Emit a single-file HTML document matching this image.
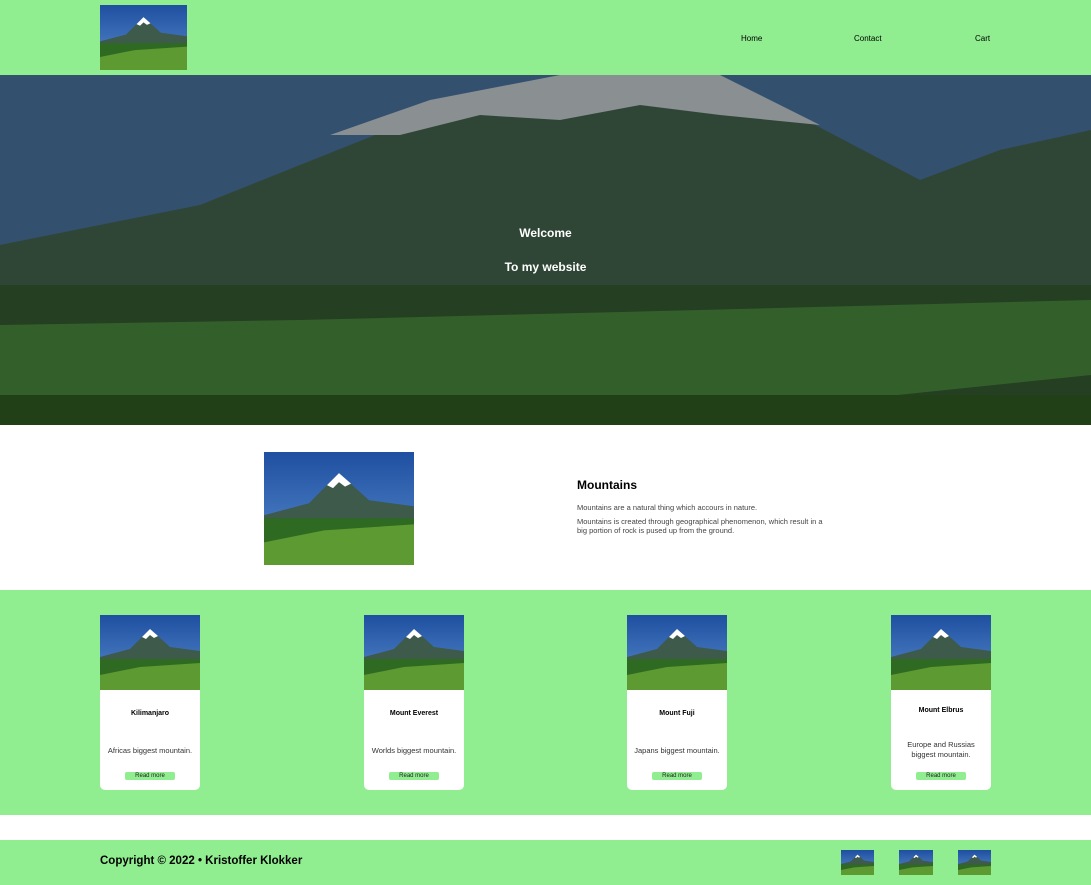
<!DOCTYPE html>
<html><head><style>
*{margin:0;padding:0;box-sizing:border-box}
body{width:1091px;height:885px;font-family:"Liberation Sans",sans-serif;background:#fff;position:relative;overflow:hidden}
.abs{position:absolute}
.g{background:#90ee90}
svg{display:block}
.nav{font-size:8px;color:#000}
.card{position:absolute;top:615px;width:100px;height:175px;background:#fff;border-radius:0 0 5px 5px;text-align:center}
.card h4{font-size:7px;position:absolute;top:95px;width:100%}
.card p{font-size:7.5px;color:#333;position:absolute;width:100%;padding:0 4px}
.card .b{position:absolute;top:157px;left:25px;width:50px;height:8px;background:#90ee90;border-radius:2px;font-size:6px;line-height:8px;color:#222}
</style></head><body>
<svg width="0" height="0" style="position:absolute"><defs>
<linearGradient id="sky" x1="0" y1="0" x2="0" y2="1"><stop offset="0" stop-color="#1f4fa0"/><stop offset="1" stop-color="#5a8fd0"/></linearGradient>
<symbol id="m" viewBox="0 0 100 75" preserveAspectRatio="none">
<rect width="100" height="75" fill="url(#sky)"/>
<polygon points="0,42 30,34 50,14 70,32 100,36 100,75 0,75" fill="#3d5a4a"/>
<polygon points="42,22 50,14 58,21 54,23 50,20 46,24" fill="#fff"/>
<rect y="44" width="100" height="31" fill="#2f6a22"/>
<polygon points="0,60 40,52 100,48 100,75 0,75" fill="#5d9a32"/>
</symbol></defs></svg>

<div class="abs g" style="left:0;top:0;width:1091px;height:75px"></div>
<svg class="abs" style="left:100px;top:5px" width="87" height="65"><use href="#m" width="87" height="65"/></svg>
<div class="abs nav" style="left:741px;top:34px">Home</div>
<div class="abs nav" style="left:854px;top:34px">Contact</div>
<div class="abs nav" style="left:975px;top:34px">Cart</div>

<svg class="abs" style="left:0;top:75px" width="1091" height="350" viewBox="0 0 1091 350" preserveAspectRatio="none">
<rect width="1091" height="350" fill="#33506f"/>
<polygon points="0,170 200,130 400,50 560,0 720,0 920,105 1000,75 1091,55 1091,350 0,350" fill="#2f4636"/>
<polygon points="330,60 430,25 560,0 720,0 820,50 720,40 640,30 560,45 480,40 400,60" fill="#8a8f92"/>
<rect y="210" width="1091" height="140" fill="#253f22"/>
<polygon points="0,250 300,245 700,235 1091,225 1091,300 800,330 0,320" fill="#33602a"/>
<rect y="320" width="1091" height="30" fill="#224018"/>
</svg>
<div class="abs" style="left:0;top:226px;width:1091px;text-align:center;color:#fff;font-weight:bold;font-size:12px">Welcome</div>
<div class="abs" style="left:0;top:260px;width:1091px;text-align:center;color:#fff;font-weight:bold;font-size:12px">To my website</div>

<svg class="abs" style="left:264px;top:452px" width="150" height="113"><use href="#m" width="150" height="113"/></svg>
<div class="abs" style="left:577px;top:478px;font-size:12px;font-weight:bold;color:#000">Mountains</div>
<div class="abs" style="left:577px;top:503px;font-size:7.5px;color:#444;width:255px;line-height:9.5px">Mountains are a natural thing which accours in nature.<br><div style="margin-top:4px">Mountains is created through geographical phenomenon, which result in a big portion of rock is pused up from the ground.</div></div>

<div class="abs g" style="left:0;top:590px;width:1091px;height:225px"></div>
<div class="card" style="left:100px"><svg width="100" height="75"><use href="#m" width="100" height="75"/></svg><h4>Kilimanjaro</h4><p style="top:131px">Africas biggest mountain.</p><div class="b">Read more</div></div>
<div class="card" style="left:364px"><svg width="100" height="75"><use href="#m" width="100" height="75"/></svg><h4>Mount Everest</h4><p style="top:131px">Worlds biggest mountain.</p><div class="b">Read more</div></div>
<div class="card" style="left:627px"><svg width="100" height="75"><use href="#m" width="100" height="75"/></svg><h4>Mount Fuji</h4><p style="top:131px">Japans biggest mountain.</p><div class="b">Read more</div></div>
<div class="card" style="left:891px"><svg width="100" height="75"><use href="#m" width="100" height="75"/></svg><h4 style="top:92px">Mount Elbrus</h4><p style="top:125px;line-height:10px">Europe and Russias biggest mountain.</p><div class="b">Read more</div></div>

<div class="abs g" style="left:0;top:840px;width:1091px;height:45px"></div>
<div class="abs" style="left:100px;top:855px;font-size:11.5px;font-weight:bold;color:#000">Copyright © 2022 • Kristoffer Klokker</div>
<svg class="abs" style="left:841px;top:850px" width="33" height="25"><use href="#m" width="33" height="25"/></svg>
<svg class="abs" style="left:899px;top:850px" width="34" height="25"><use href="#m" width="34" height="25"/></svg>
<svg class="abs" style="left:958px;top:850px" width="33" height="25"><use href="#m" width="33" height="25"/></svg>
</body></html>
